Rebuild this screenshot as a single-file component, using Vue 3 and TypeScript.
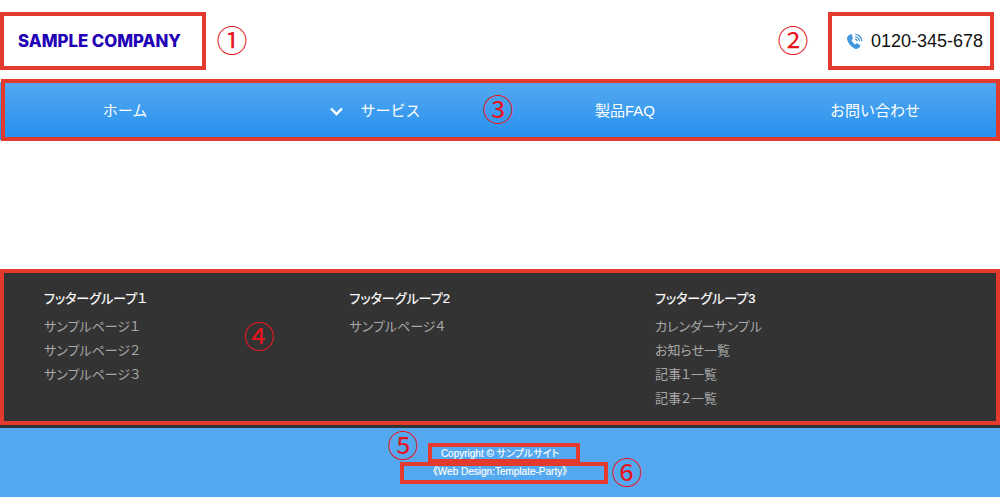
<script setup lang="ts">
const navItems = [
  { label: 'ホーム', drop: false },
  { label: 'サービス', drop: true },
  { label: '製品FAQ', drop: false },
  { label: 'お問い合わせ', drop: false },
]

const groups = [
  { title: 'フッターグループ１', links: ['サンプルページ１', 'サンプルページ２', 'サンプルページ３'] },
  { title: 'フッターグループ2', links: ['サンプルページ４'] },
  { title: 'フッターグループ3', links: ['カレンダーサンプル', 'お知らせ一覧', '記事１一覧', '記事２一覧'] },
]

// red annotations drawn over the page
const boxes = [
  { id: 1, left: 0, top: 12, width: 206, height: 58 },
  { id: 2, left: 828, top: 12, width: 166, height: 58 },
  { id: 3, left: 1, top: 79, width: 999, height: 62 },
  { id: 4, left: 0, top: 269, width: 1000, height: 156 },
  { id: 5, left: 428, top: 443, width: 152, height: 20 },
  { id: 6, left: 400, top: 462, width: 208, height: 22 },
]
const marks = [
  { text: '①', left: 232, top: 38 },
  { text: '②', left: 793, top: 38 },
  { text: '③', left: 498, top: 107 },
  { text: '④', left: 259, top: 334 },
  { text: '⑤', left: 403, top: 443 },
  { text: '⑥', left: 627, top: 470 },
]
</script>

<template>
  <div class="page">
    <header class="top">
      <div class="logo">SAMPLE COMPANY</div>
      <div class="tel">
        <svg class="tel-icon" width="17" height="17" viewBox="0 0 17 17" aria-hidden="true">
          <path d="M4.600 1.200 2 3C.8 4 .7 6 1.700 8.200c1.500 3.300 3.700 5.600 6.800 7.200 1.600.8 3.200.7 4.300-.3l1.500-1.700c.3-.4.2-.9-.2-1.200l-2.700-1.800c-.4-.3-.9-.2-1.200.1l-.9 1c-1.600-.8-3-2.400-3.900-4.400l1.100-.8c.4-.3.5-.8.3-1.200L5.800 1.500c-.3-.4-.8-.5-1.200-.3Z" fill="#3f97dd" />
          <path d="M9 6.200a2 2 0 0 1 2 2M9.200 3.800a4.400 4.400 0 0 1 4.200 4.400M9.400 1.400a6.800 6.800 0 0 1 6.400 6.800" fill="none" stroke="#3f97dd" stroke-width="1.300" />
        </svg>
        <span>0120-345-678</span>
      </div>
    </header>

    <nav class="menu">
      <a v-for="item in navItems" :key="item.label" class="menu-item">
        <svg v-if="item.drop" class="chevron" width="15" height="10" viewBox="0 0 15 10" aria-hidden="true">
          <path d="M2 2.500 7.500 8 13 2.500" fill="none" stroke="#fff" stroke-width="2.400" />
        </svg>
        <span>{{ item.label }}</span>
      </a>
    </nav>

    <main class="content"></main>

    <footer>
      <div class="groups">
        <section v-for="g in groups" :key="g.title" class="group">
          <h3>{{ g.title }}</h3>
          <a v-for="l in g.links" :key="l">{{ l }}</a>
        </section>
      </div>
      <div class="copy">
        <small>Copyright © サンプルサイト</small>
        <small>《Web Design:Template-Party》</small>
      </div>
    </footer>

    <div
      v-for="b in boxes"
      :key="b.id"
      class="box"
      :style="{ left: b.left + 'px', top: b.top + 'px', width: b.width + 'px', height: b.height + 'px' }"
    ></div>
    <span
      v-for="m in marks"
      :key="m.text"
      class="mark"
      :style="{ left: m.left + 'px', top: m.top + 'px' }"
    >{{ m.text }}</span>
  </div>
</template>

<style>
html, body { margin: 0; background: #fff; }
</style>

<style scoped>
.page {
  position: relative;
  width: 1000px;
  height: 497px;
  overflow: hidden;
  font-family: "Liberation Sans", "Noto Sans CJK JP", sans-serif;
}
.top {
  height: 82px;
  display: flex;
  justify-content: space-between;
  align-items: center;
  padding: 0 17px 0 18px;
  box-sizing: border-box;
}
.logo {
  font-family: Inter, sans-serif;
  font-weight: 800;
  font-size: 16.800px;
  color: #2200b5;
}
.tel {
  display: flex;
  align-items: center;
  gap: 8px;
  font-size: 18px;
  color: #111;
}
.tel-icon { flex: none; }
.menu {
  height: 58px;
  display: grid;
  grid-template-columns: repeat(4, 1fr);
  background: linear-gradient(#55a9f0, #2490ee);
}
.menu-item {
  display: flex;
  justify-content: center;
  align-items: center;
  gap: 16px;
  padding-bottom: 3px;
  color: #fff;
  font-size: 15px;
}
.chevron { margin-top: 3px; }
.content { height: 130px; }
footer { background: #333; }
.groups {
  height: 158px;
  box-sizing: border-box;
  padding: 20px 0 0 44px;
  display: grid;
  grid-template-columns: repeat(3, 305.500px);
  font-feature-settings: "palt";
}
.group { display: flex; flex-direction: column; }
.group h3 {
  margin: 0 0 7px;
  font-size: 13px;
  font-weight: 400;
  line-height: 18px;
  color: #fff;
  -webkit-text-stroke: 0.2px #fff;
}
.group a {
  font-size: 13px;
  line-height: 24px;
  color: #a8a8a8;
}
.copy {
  height: 69px;
  box-sizing: border-box;
  padding-top: 17px;
  background: #53a8ef;
  display: flex;
  flex-direction: column;
  align-items: center;
  font-feature-settings: "palt";
}
.copy small {
  font-size: 10px;
  line-height: 18px;
  color: #fff;
  -webkit-text-stroke: 0.15px #fff;
}
.box {
  position: absolute;
  box-sizing: border-box;
  border: 4px solid #e23a2c;
}
.mark {
  position: absolute;
  transform: translate(-50%, -50%);
  font-family: "Noto Sans CJK JP", sans-serif;
  font-size: 31px;
  line-height: 1;
  color: #e6141c;
}
</style>
